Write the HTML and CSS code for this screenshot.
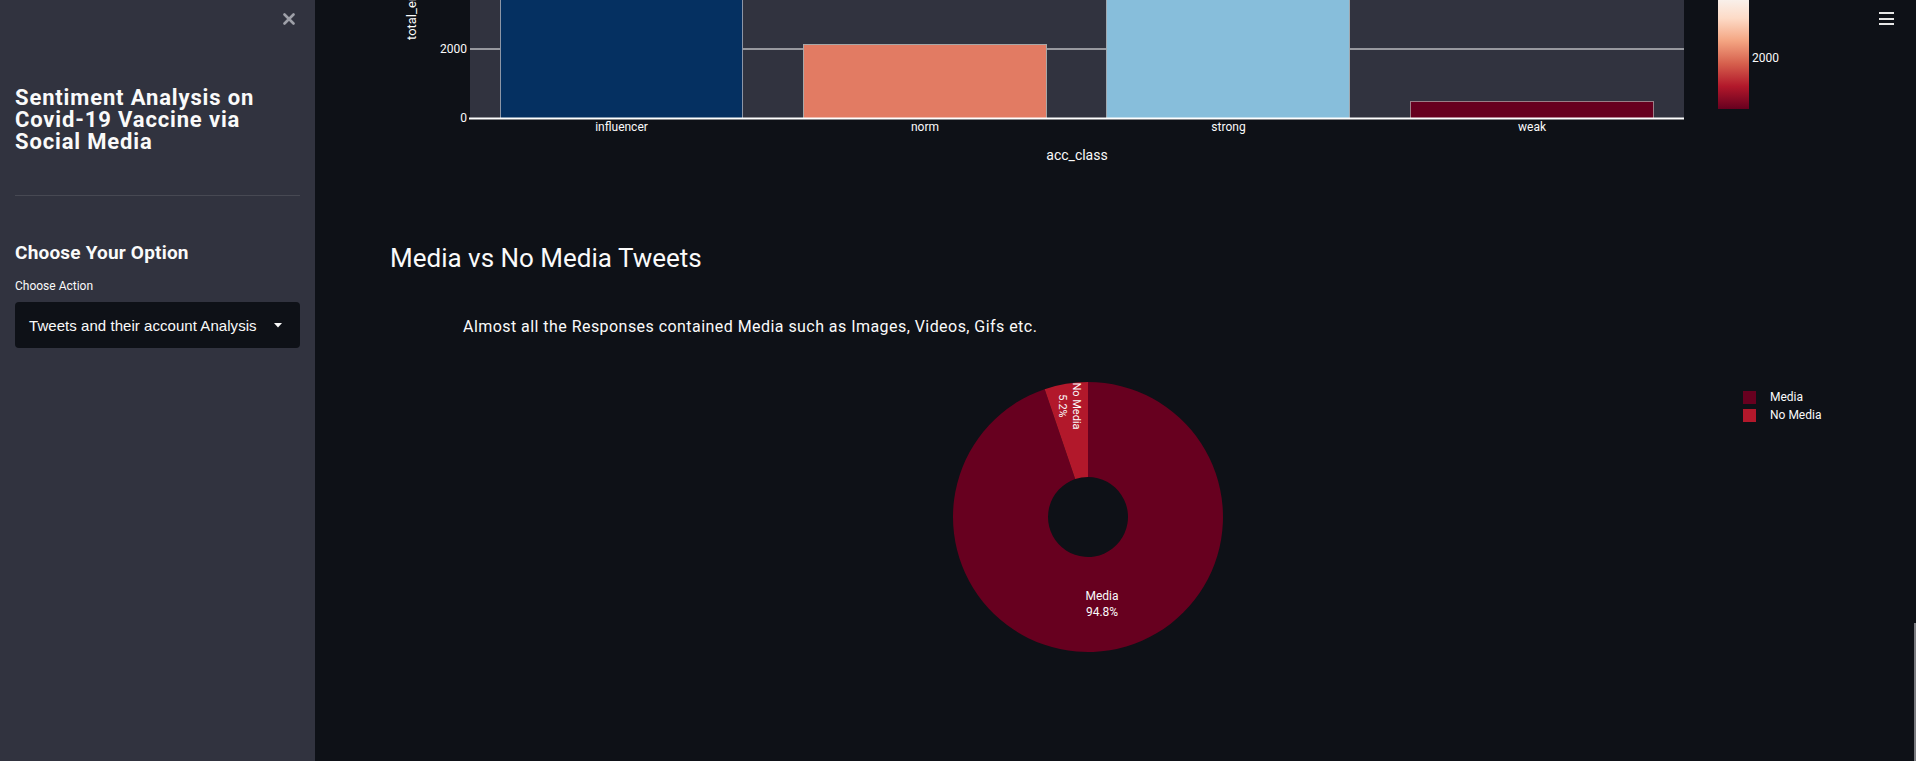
FILE: index.html
```html
<!DOCTYPE html>
<html>
<head>
<meta charset="utf-8">
<link rel="stylesheet" href="styles.css">
</head>
<body>
<div class="app">
  <aside class="sidebar">
    <div class="close-row">
      <svg class="close" width="12" height="12" viewBox="0 0 12 12"><path d="M1.5 1.5 L10.5 10.5 M10.5 1.5 L1.5 10.5" stroke="#9ea0a8" stroke-width="2.6" stroke-linecap="round"/></svg>
    </div>
    <h1 class="side-title">Sentiment Analysis on Covid-19 Vaccine via Social Media</h1>
    <hr class="divider">
    <h2 class="side-sub">Choose Your Option</h2>
    <label class="side-label">Choose Action</label>
    <div class="select">
      <span class="select-text">Tweets and their account Analysis</span>
      <svg class="caret" width="8" height="5" viewBox="0 0 8 5"><path d="M0 0 H8 L4 4.5 Z" fill="#fafafa"/></svg>
    </div>
  </aside>
  <main class="main">
    <svg class="bar-chart" width="1601" height="175" viewBox="315 0 1601 175">
      <rect x="470" y="0" width="1214" height="119" fill="#31333f"/>
      <line x1="470" y1="49" x2="1684" y2="49" stroke="#ffffff" stroke-width="1"/>
      <rect x="500.5" y="-20" width="242" height="138.5" fill="#053061" stroke="#8d96a6" stroke-width="1"/>
      <rect x="803.5" y="44.5" width="243" height="74" fill="#e27b63" stroke="#a7a7a7" stroke-width="1"/>
      <rect x="1106.5" y="-20" width="243" height="138.5" fill="#87bedb" stroke="#a0a9b0" stroke-width="1"/>
      <rect x="1410.5" y="101.5" width="243" height="17" fill="#67001f" stroke="#9a8088" stroke-width="1"/>
      <line x1="469" y1="118.5" x2="1684" y2="118.5" stroke="#ffffff" stroke-width="2"/>
      <g class="tick" fill="#fafafa" font-size="12" text-anchor="end">
        <text x="467" y="53">2000</text>
        <text x="467" y="122">0</text>
      </g>
      <text class="tick" x="0" y="0" transform="translate(416 40) rotate(-90)" fill="#fafafa" font-size="13">total_engagement</text>
      <g class="tick" fill="#fafafa" font-size="12" text-anchor="middle">
        <text x="621.5" y="131">influencer</text>
        <text x="925" y="131">norm</text>
        <text x="1228.5" y="131">strong</text>
        <text x="1532" y="131">weak</text>
      </g>
      <text class="tick" x="1077" y="160" fill="#fafafa" font-size="14" text-anchor="middle">acc_class</text>
      <defs>
        <linearGradient id="cbar" x1="0" y1="0" x2="0" y2="1">
          <stop offset="0" stop-color="#f9f0ea"/>
          <stop offset="0.167" stop-color="#fddbc7"/>
          <stop offset="0.375" stop-color="#f4a582"/>
          <stop offset="0.583" stop-color="#d6604d"/>
          <stop offset="0.792" stop-color="#b2182b"/>
          <stop offset="1" stop-color="#67001f"/>
        </linearGradient>
      </defs>
      <rect x="1718" y="0" width="31" height="109" fill="url(#cbar)"/>
      <text class="tick" x="1752" y="62" fill="#fafafa" font-size="12">2000</text>
    </svg>

    <section class="section">
      <h2 class="section-title">Media vs No Media Tweets</h2>
      <p class="section-text">Almost all the Responses contained Media such as Images, Videos, Gifs etc.</p>
    </section>

    <svg class="pie-chart" width="1601" height="330" viewBox="315 350 1601 330">
      <path d="M1088 382 A135 135 0 1 1 1044.67 389.14 L1075.16 479.12 A40 40 0 1 0 1088 477 Z" fill="#67001f"/>
      <path d="M1088 382 A135 135 0 0 0 1044.67 389.14 L1075.16 479.12 A40 40 0 0 1 1088 477 Z" fill="#b2182b"/>
      <g class="pie-label" fill="#fafafa" font-size="12" text-anchor="middle">
        <text x="1102" y="600">Media</text>
        <text x="1102" y="616">94.8%</text>
      </g>
      <g class="pie-label" fill="#fafafa" font-size="11" text-anchor="middle" transform="translate(1070 406) rotate(90)">
        <text x="0" y="-3">No Media</text>
        <text x="0" y="11">5.2%</text>
      </g>
      <rect x="1743" y="391" width="13" height="13" fill="#67001f"/>
      <rect x="1743" y="409" width="13" height="13" fill="#b2182b"/>
      <g class="pie-label" fill="#fafafa" font-size="12">
        <text x="1770" y="401">Media</text>
        <text x="1770" y="419">No Media</text>
      </g>
    </svg>

    <button class="menu" aria-label="menu">
      <span></span><span></span><span></span>
    </button>
    <div class="scroll-thumb"></div>
  </main>
</div>
</body>
</html>
```

FILE: styles.css
```css
html, body {
  margin: 0;
  padding: 0;
  background: #0e1117;
  color: #fafafa;
  font-family: Roboto, "Noto Sans", sans-serif;
  overflow: hidden;
}

.app {
  display: flex;
  width: 1916px;
  height: 761px;
}

.sidebar {
  width: 315px;
  flex: none;
  box-sizing: border-box;
  background: #31333f;
  padding: 0 15px;
  display: flex;
  flex-direction: column;
}

.close-row {
  display: flex;
  justify-content: flex-end;
  padding-top: 13px;
  padding-right: 5px;
  height: 12px;
}

.side-title {
  margin: 62px 0 0;
  font-size: 22px;
  line-height: 22px;
  font-weight: 700;
  letter-spacing: 0.85px;
}

.divider {
  margin: 42px 0 0;
  border: none;
  height: 1px;
  background: #474953;
}

.side-sub {
  margin: 45px 0 0;
  font-size: 19px;
  line-height: 24px;
  font-weight: 700;
  letter-spacing: 0.2px;
}

.side-label {
  margin-top: 13px;
  font-size: 12px;
  line-height: 16px;
}

.select {
  margin-top: 8px;
  height: 46px;
  background: #0e1117;
  border-radius: 4px;
  display: flex;
  align-items: center;
  padding: 0 18px 0 14px;
  justify-content: space-between;
}

.select-text {
  font-family: "Liberation Sans", Arial, sans-serif;
  font-size: 15px;
  letter-spacing: 0.05px;
}

.main {
  flex: 1;
  position: relative;
  display: flex;
  flex-direction: column;
}

.bar-chart, .pie-chart {
  display: block;
  flex: none;
}

.tick, .pie-label {
  font-family: Roboto, sans-serif;
}

.section {
  padding-left: 75px;
  margin-top: 66px;
  height: 109px;
}

.section-title {
  margin: 0;
  font-size: 26px;
  line-height: 34px;
  font-weight: 400;
}

.section-text {
  margin: 40px 0 0 73px;
  font-size: 16px;
  line-height: 24px;
  letter-spacing: 0.45px;
}

.menu {
  position: absolute;
  top: 12px;
  right: 22px;
  width: 15px;
  height: 13px;
  padding: 0;
  border: none;
  background: none;
  display: flex;
  flex-direction: column;
  justify-content: space-between;
}

.menu span {
  display: block;
  height: 2px;
  background: #e6e6e6;
}

.scroll-thumb {
  position: absolute;
  right: 0;
  top: 623px;
  width: 2px;
  height: 138px;
  background: #7a7b80;
}
```
